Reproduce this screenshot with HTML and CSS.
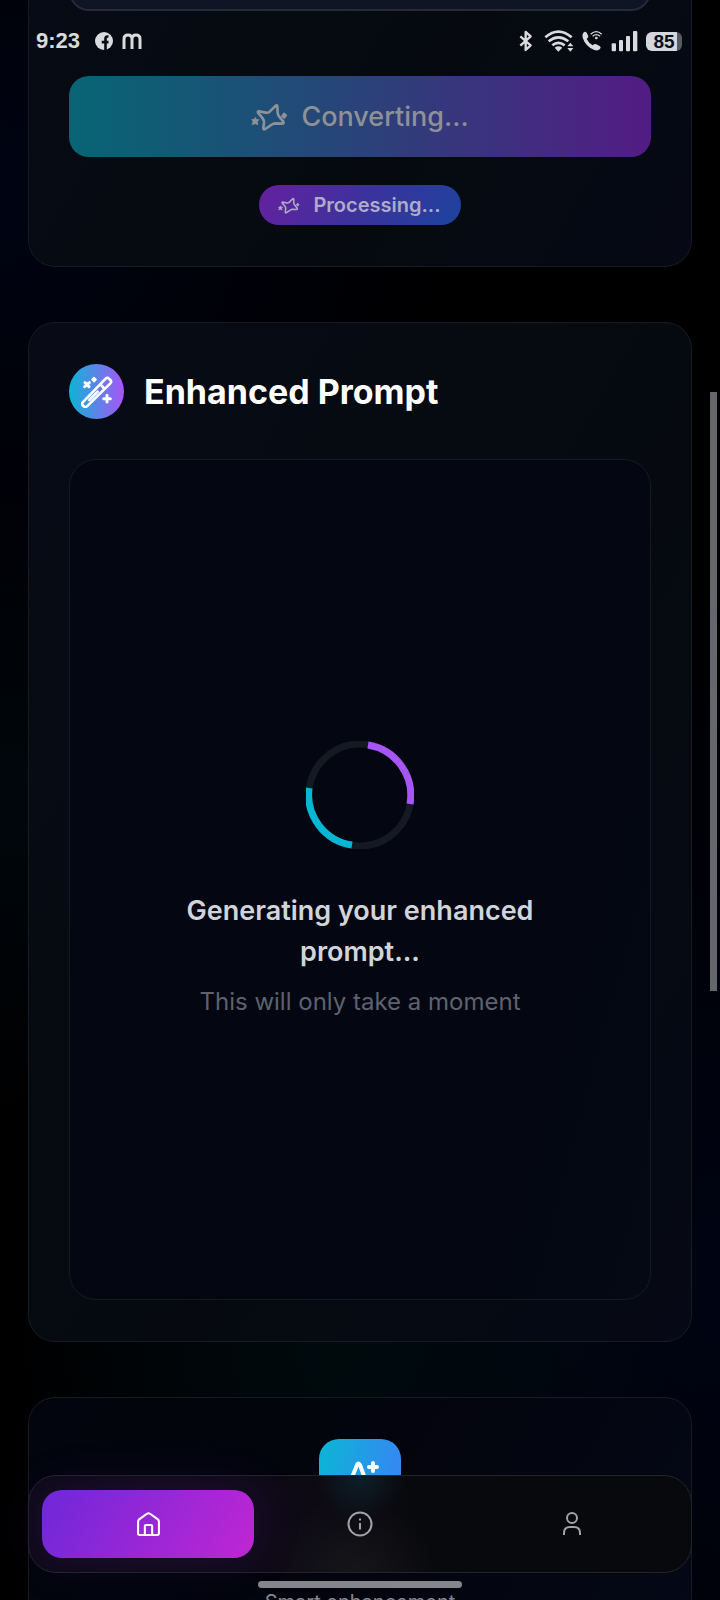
FILE: index.html
```html
<!DOCTYPE html>
<html lang="en">
<head>
<meta charset="utf-8">
<meta name="viewport" content="width=device-width, initial-scale=1">
<title>Enhanced Prompt</title>
<link rel="stylesheet" href="styles.css">
</head>
<body>
<svg class="defs" aria-hidden="true">
  <symbol id="spark" viewBox="0 0 111 84">
    <path d="M74 8Q78 5 79 10L80 31Q81 36 84 40L97 56Q99 62 94 62L73 61Q67 61 62 65L43 78Q37 81 37 75L39 58Q39 51 35 46L21 29Q19 24 24 25L45 29Q51 30 56 26Z" fill="none" stroke="currentColor" stroke-width="8" stroke-linejoin="round"/>
    <path d="M13 43L16 49L24 50L19 56L21 65L12 62L3 65L6 56L2 49L10 49Z" fill="currentColor" stroke="currentColor" stroke-width="2" stroke-linejoin="round"/>
    <path d="M99 31L106 37L100 45L93 39Z" fill="currentColor" stroke="currentColor" stroke-width="5" stroke-linejoin="round"/>
  </symbol>
</svg>
<div class="screen">
  <main class="content">
    <section class="card card-input">
      <textarea class="prompt" aria-label="Prompt" readonly></textarea>
      <button class="convert" type="button" disabled>
        <svg class="spark-lg" aria-hidden="true"><use href="#spark"/></svg>
        <span>Converting...</span>
      </button>
      <div class="pill" role="status">
        <svg class="spark-sm" aria-hidden="true"><use href="#spark"/></svg>
        <span>Processing...</span>
      </div>
    </section>

    <section class="card card-output">
      <header class="card-head">
        <span class="badge">
          <svg viewBox="0 0 96 96" width="32" height="32" fill="none" stroke="#fff" stroke-width="8" stroke-linecap="round" stroke-linejoin="round" aria-hidden="true">
            <path d="M5 79L74 8Q79 3 84 8L88 12Q93 17 88 22L18 91Q13 95 8 91L5 88Q1 84 5 79ZM58 25L70 38M25 72L50 47"/>
            <path d="M12 20L24 32M25 20L11 32" stroke-width="9"/>
            <path d="M39 5L45 11L39 17L33 11Z" fill="#fff" stroke-width="5"/>
            <path d="M78 58V78M68 68H88" stroke-width="9"/>
          </svg>
        </span>
        <h2>Enhanced Prompt</h2>
      </header>
      <div class="result" aria-live="polite">
        <svg class="spinner" viewBox="0 0 108 108" fill="none" stroke-width="7" aria-hidden="true">
          <circle cx="54" cy="54" r="51" stroke="#141922"/>
          <path d="M62 4A51 51 0 0 1 104 63" stroke="#a855f7"/>
          <path d="M46 104A51 51 0 0 1 3 47" stroke="#06b6d4"/>
        </svg>
        <p class="result-title">Generating your enhanced prompt...</p>
        <p class="result-note">This will only take a moment</p>
      </div>
    </section>

    <section class="card card-feature">
      <span class="tile">
        <svg viewBox="0 0 48 48" width="48" height="48" fill="none" stroke="#fff" stroke-width="4" stroke-linecap="round" stroke-linejoin="round" aria-hidden="true">
          <path d="M9 39L21 9Q22 6 24 9L35 39M14 30H30M33 11H41M37 7V15"/>
        </svg>
      </span>
      <p>Smart enhancement</p>
    </section>
  </main>

  <div class="status">
    <div class="status-side">
      <span class="clock">9:23</span>
      <svg viewBox="0 0 24 24" width="18" height="18" aria-hidden="true">
        <circle cx="12" cy="12" r="12" fill="#d9dbde"/>
        <path d="M18 6H16.500Q14 6 14 9V24M9 13.500H18" fill="none" stroke="#090c15" stroke-width="3.500"/>
      </svg>
      <svg viewBox="0 0 20 16" width="20" height="16" fill="none" stroke="#d9dbde" stroke-width="3" aria-hidden="true">
        <path d="M2 16V6Q2 2 6 2Q10 2 10 6V16M10 6Q10 2 14 2Q18 2 18 6V16"/>
      </svg>
    </div>
    <div class="status-side status-right">
      <svg class="bluetooth" viewBox="54 30 42 66" width="14" height="22" fill="none" stroke="#d9dbde" stroke-width="7" stroke-linejoin="round" aria-hidden="true">
        <path d="M58 49L89 76L74 90V36L89 49L58 77"/>
      </svg>
      <svg viewBox="129 30 90 66" width="30" height="22" fill="none" stroke="#d9dbde" stroke-width="8" aria-hidden="true">
        <path d="M133 52Q172 18 212 52M143 64Q172 40 202 64M154 76Q172 61 191 76"/>
        <path d="M161 83Q172 75 184 83L172 95Z" fill="#d9dbde" stroke="none"/>
        <path d="M208 68L217 79H199ZM208 95L217 84H199Z" fill="#d9dbde" stroke="none"/>
      </svg>
      <svg viewBox="243 30 63 66" width="21" height="22" aria-hidden="true">
        <path d="M247 38Q253 33 257 38L262 48Q263 53 257 57Q264 70 275 76Q281 70 286 73L297 79Q301 82 297 87Q290 94 280 90Q254 80 245 53Q243 43 247 38Z" fill="#d9dbde"/>
        <path d="M269 43Q286 27 302 43M275 49Q286 39 297 49" fill="none" stroke="#d9dbde" stroke-width="4"/>
        <circle cx="286" cy="54" r="4" fill="#d9dbde"/>
      </svg>
      <svg viewBox="330 30 81 66" width="27" height="22" fill="#d9dbde" aria-hidden="true">
        <rect x="332" y="70" width="13" height="24" rx="3"/><rect x="354" y="60" width="12" height="34" rx="3"/><rect x="375" y="48" width="12" height="46" rx="3"/><rect x="396" y="33" width="13" height="61" rx="3"/>
      </svg>
      <span class="battery">85</span>
    </div>
  </div>

  <div class="scroll-thumb"></div>

  <nav class="tabs" aria-label="Main">
    <button class="tab tab-active" type="button" aria-label="Home">
      <svg viewBox="0 0 24 24" width="25" height="25" aria-hidden="true"><path d="M2 22V9.500Q2 8 3 7L10.500 1.700Q12 .7 13.500 1.700L21 7Q22 8 22 9.500V20.500Q22 22 20.500 22H3.500Q2 22 2 20.500M8.500 22V13.500Q8.500 12.500 9.500 12.500H14.500Q15.500 12.500 15.500 13.500V22"/></svg>
    </button>
    <button class="tab" type="button" aria-label="About">
      <svg viewBox="0 0 26 26" width="26" height="26" aria-hidden="true"><circle cx="13" cy="13" r="11.500"/><path d="M13 12V18.500M13 7.500V9.500"/></svg>
    </button>
    <button class="tab" type="button" aria-label="Profile">
      <svg viewBox="0 0 26 26" width="26" height="26" aria-hidden="true"><circle cx="13" cy="7" r="5"/><path d="M5 24V22Q5 16 11 16H15Q21 16 21 22V24"/></svg>
    </button>
  </nav>

  <div class="home-bar"></div>
</div>
</body>
</html>
```
FILE: styles.css
```css
* {
  box-sizing: border-box;
}

body {
  margin: 0;
  background: #000;
  color: #fff;
  font-family: Inter, "Noto Sans", sans-serif;
}

h2,
p {
  margin: 0;
}

.defs {
  display: none;
}

.screen {
  position: relative;
  height: 100vh;
  overflow: hidden;
  background:
    radial-gradient(circle at 0 50%, rgba(0, 14, 26, 0.45), transparent 30%),
    radial-gradient(circle at 50% 84%, rgba(0, 20, 18, 0.5), transparent 25%),
    radial-gradient(circle at 100% 80%, rgba(0, 3, 20, 0.9), transparent 50%),
    radial-gradient(circle at 0 12%, rgba(0, 3, 20, 0.9), transparent 30%),
    #000;
}

.content {
  display: flex;
  flex-direction: column;
  gap: 55px;
  padding: 0 28px;
}

.card {
  display: flex;
  flex-direction: column;
  padding: 41px 40px;
  border: 1px solid #181b22;
  border-radius: 27px;
  background: linear-gradient(120deg, #080b16 0%, #060a11 35%, #060a10 60%, #060915 100%);
}

.card-input {
  margin-top: -110px;
  align-items: center;
}

.prompt {
  width: 100%;
  height: 79px;
  margin-bottom: 65px;
  padding: 20px;
  border: 2px solid #252b37;
  border-radius: 20px;
  background: #0f1524;
  color: #d1d5db;
  font: inherit;
  resize: none;
}

.convert {
  display: flex;
  align-items: center;
  justify-content: center;
  gap: 13px;
  width: 100%;
  height: 81px;
  margin-bottom: 28px;
  padding: 0;
  border: 0;
  border-radius: 20px;
  background: linear-gradient(90deg, #076574, #264678 45%, #521c84);
  color: #8e9196;
  font: 500 27px/41px Inter, "Noto Sans", sans-serif;
}

.spark-lg {
  width: 37px;
  height: 28px;
}

.spark-sm {
  width: 22px;
  height: 17px;
}

.pill {
  display: flex;
  align-items: center;
  gap: 13px;
  height: 40px;
  padding: 0 20px 0 19px;
  border-radius: 20px;
  background: linear-gradient(120deg, #66209f, #3c329c 50%, #1d439e);
  color: #b0abc8;
  font-size: 20px;
  font-weight: 600;
  line-height: 28px;
}

.card-head {
  display: flex;
  align-items: center;
  gap: 20px;
  margin-bottom: 40px;
}

.card-head h2 {
  font-size: 34px;
  font-weight: 700;
  line-height: 48px;
}

.badge {
  display: flex;
  align-items: center;
  justify-content: center;
  width: 55px;
  height: 55px;
  border-radius: 50%;
  background: linear-gradient(90deg, #0cb5d6, #a855f7);
}

.result {
  display: flex;
  flex-direction: column;
  align-items: center;
  justify-content: center;
  min-height: 841px;
  padding: 40px;
  border: 1px solid #151920;
  border-radius: 27px;
  background: linear-gradient(105deg, #040712, #040712 78%, #050914);
  text-align: center;
}

.spinner {
  width: 108px;
  height: 108px;
  margin-bottom: 41px;
}

.result-title {
  max-width: 400px;
  margin-bottom: 13px;
  color: #d1d5db;
  font-size: 27px;
  font-weight: 600;
  line-height: 41px;
}

.result-note {
  color: #5d626e;
  font-size: 24px;
  line-height: 34px;
}

.card-feature {
  align-items: center;
  gap: 65px;
  background: linear-gradient(120deg, #02050d, #03040d 50%, #050817);
}

.tile {
  display: flex;
  align-items: center;
  justify-content: center;
  width: 82px;
  height: 82px;
  border-radius: 20px;
  background: linear-gradient(100deg, #0ab6d5, #3b82f6);
}

.card-feature p {
  color: #85888f;
  font-size: 20px;
  line-height: 32px;
}

.status {
  position: absolute;
  inset: 0 0 auto;
  display: flex;
  align-items: center;
  justify-content: space-between;
  height: 82px;
  padding: 0 38px 0 36px;
  color: #d9dbde;
}

.status-side {
  display: flex;
  align-items: center;
  gap: 9px;
}

.clock {
  margin-right: 6px;
  font-family: "Liberation Sans", Arial, sans-serif;
  font-size: 22px;
  font-weight: 700;
  line-height: 28px;
}

.status-right {
  gap: 8px;
}

.bluetooth {
  margin-right: 3px;
}

.battery {
  width: 36px;
  height: 19px;
  border-radius: 6px;
  background: linear-gradient(90deg, #d3d6dc 87%, #575a61 87%);
  color: #090c15;
  font-family: "Liberation Sans", Arial, sans-serif;
  font-size: 19px;
  font-weight: 700;
  line-height: 19px;
  text-align: center;
}

.scroll-thumb {
  position: absolute;
  top: 392px;
  right: 3px;
  width: 7px;
  height: 599px;
  background: #66676c;
}

.tabs {
  position: absolute;
  right: 28px;
  bottom: 27px;
  left: 28px;
  display: grid;
  grid-template-columns: repeat(3, 1fr);
  padding: 14px 13px;
  border: 1px solid #222428;
  border-radius: 28px;
  background:
    radial-gradient(circle at 50% 0, rgba(14, 38, 48, 0.8), transparent 13%),
    radial-gradient(circle at 49% 110%, #17171a, transparent 24%),
    linear-gradient(90deg, #0e0a18, #0f0a17 35%, #08090c 60%);
}

.tab {
  display: flex;
  align-items: center;
  justify-content: center;
  height: 68px;
  padding: 0;
  border: 0;
  border-radius: 20px;
  background: none;
  color: #a0a3a9;
}

.tab svg {
  fill: none;
  stroke: currentColor;
  stroke-width: 2;
  stroke-linejoin: round;
}

.tab-active {
  background: linear-gradient(120deg, #6d28d9, #c026d3);
  box-shadow: 0 0 50px rgba(124, 40, 220, 0.15);
  color: #fff;
}

.home-bar {
  position: absolute;
  bottom: 12px;
  left: 50%;
  width: 204px;
  height: 7px;
  margin-left: -102px;
  border-radius: 4px;
  background: #85868c;
}
```
